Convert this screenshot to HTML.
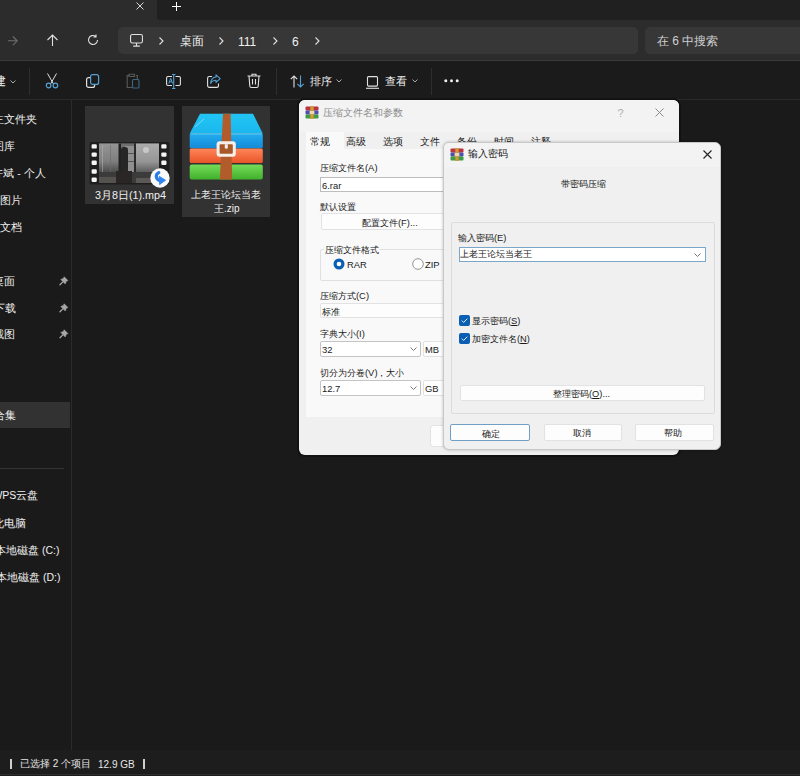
<!DOCTYPE html>
<html><head><meta charset="utf-8">
<style>
*{box-sizing:border-box;margin:0;padding:0}
html,body{width:800px;height:776px;overflow:hidden;background:#1a1a1a;font-family:"Liberation Sans",sans-serif;color:#fff}
.a{position:absolute}
.t{position:absolute;white-space:nowrap;line-height:1}
svg{position:absolute;overflow:visible}
</style></head><body>
<!-- tab strip -->
<div class="a" style="left:0;top:0;width:800px;height:60px;background:#2c2c2c"></div>
<div class="a" style="left:157px;top:0;width:643px;height:20px;background:#202020;border-bottom-left-radius:3px"></div>
<svg style="left:136px;top:2px" width="8" height="8"><path d="M0.5 0.5L7.5 7.5M7.5 0.5L0.5 7.5" stroke="#d8d8d8" stroke-width="1"/></svg>
<svg style="left:172px;top:2px" width="9" height="9"><path d="M4.5 0V9M0 4.5H9" stroke="#fff" stroke-width="1"/></svg>

<!-- nav row -->
<svg style="left:7.5px;top:35.5px" width="11" height="10"><path d="M0 4.8H9.2M4.9 0.5L9.2 4.8L4.9 9.1" fill="none" stroke="#6e6e6e" stroke-width="1.1"/></svg>
<svg style="left:47px;top:34px" width="11" height="12"><path d="M5.5 12V1M0.5 6L5.5 1L10.5 6" fill="none" stroke="#e0e0e0" stroke-width="1.1"/></svg>
<svg style="left:87.2px;top:34px" width="12" height="12"><path d="M10.5 6A4.5 4.5 0 1 1 8.6 2.3M9 0.5V3H6.5" fill="none" stroke="#e0e0e0" stroke-width="1.1"/></svg>
<div class="a" style="left:118px;top:27px;width:520px;height:27px;background:#373737;border-radius:5px"></div>
<svg style="left:130px;top:33.5px" width="13" height="13"><rect x="0.55" y="0.55" width="11.9" height="8.4" rx="1.6" fill="none" stroke="#e0e0e0" stroke-width="1.1"/><path d="M6.5 9V12M3.2 12.1H9.8" stroke="#e0e0e0" stroke-width="1.1"/></svg>
<svg style="left:159px;top:37px" width="5" height="8"><path d="M0.5 0.5L4 4L0.5 7.5" fill="none" stroke="#e0e0e0" stroke-width="1.1"/></svg>
<div class="t" style="left:180px;top:35px;font-size:12px;color:#f0f0f0">桌面</div>
<svg style="left:219px;top:37px" width="5" height="8"><path d="M0.5 0.5L4 4L0.5 7.5" fill="none" stroke="#e0e0e0" stroke-width="1.1"/></svg>
<div class="t" style="left:238px;top:36px;font-size:12px;color:#f0f0f0">111</div>
<svg style="left:273px;top:37px" width="5" height="8"><path d="M0.5 0.5L4 4L0.5 7.5" fill="none" stroke="#e0e0e0" stroke-width="1.1"/></svg>
<div class="t" style="left:292px;top:36px;font-size:12px;color:#f0f0f0">6</div>
<svg style="left:315px;top:37px" width="5" height="8"><path d="M0.5 0.5L4 4L0.5 7.5" fill="none" stroke="#e0e0e0" stroke-width="1.1"/></svg>
<div class="a" style="left:645px;top:27px;width:160px;height:27px;background:#373737;border-radius:5px"></div>
<div class="t" style="left:657px;top:35px;font-size:12px;color:#cfcfcf">在 6 中搜索</div>

<!-- command bar -->
<div class="a" style="left:0;top:60px;width:800px;height:1px;background:#3a3a3a"></div>
<div class="a" style="left:0;top:61px;width:800px;height:39px;background:#1b1b1b"></div>
<div class="a" style="left:0;top:99px;width:800px;height:1px;background:#2a2a2a"></div>

<!-- command bar items -->
<div class="t" style="left:-6.5px;top:75.5px;font-size:11.5px;color:#f0f0f0">建</div>
<svg style="left:10px;top:79.5px" width="6" height="4"><path d="M0.5 0.5L3 3L5.5 0.5" fill="none" stroke="#aaa" stroke-width="1"/></svg>
<div class="a" style="left:29px;top:68px;width:1px;height:27px;background:#2e2e2e"></div>
<!-- scissors -->
<svg style="left:45px;top:73px" width="14" height="16"><path d="M2.5 0.5L8.5 11M11.5 0.5L5.5 11" fill="none" stroke="#e0e0e0" stroke-width="1"/><circle cx="3.6" cy="12.5" r="2.3" fill="none" stroke="#55a0d4" stroke-width="1.2"/><circle cx="10.4" cy="12.5" r="2.3" fill="none" stroke="#55a0d4" stroke-width="1.2"/></svg>
<!-- copy -->
<svg style="left:86px;top:74px" width="14" height="14"><rect x="0.6" y="3.6" width="8" height="9.8" rx="2" fill="none" stroke="#e0e0e0" stroke-width="1.2"/><rect x="4.6" y="0.6" width="8" height="9.8" rx="2" fill="#1c1c1c" stroke="#55a0d4" stroke-width="1.2"/></svg>
<!-- paste (disabled) -->
<svg style="left:126px;top:73px" width="14" height="16"><path d="M3 2.5H1.2V14.5H6" fill="none" stroke="#5a5a5a" stroke-width="1.1"/><path d="M3 1.2H8.5V3.5H3Z" fill="none" stroke="#5a5a5a" stroke-width="1.1"/><path d="M10 2.5H11.3V6" fill="none" stroke="#5a5a5a" stroke-width="1.1"/><rect x="6.5" y="6.5" width="6.5" height="8.5" rx="1" fill="none" stroke="#3d6680" stroke-width="1.1"/></svg>
<!-- rename -->
<svg style="left:166px;top:74px" width="15" height="15"><path d="M6 2.5H2A1.5 1.5 0 0 0 0.6 4V10A1.5 1.5 0 0 0 2 11.5H6M9.5 2.5H13A1.5 1.5 0 0 1 14.4 4V10A1.5 1.5 0 0 1 13 11.5H9.5" fill="none" stroke="#e0e0e0" stroke-width="1.1"/><path d="M7.7 0.5V14.5M6 0.5H9.4M6 14.5H9.4" fill="none" stroke="#55a0d4" stroke-width="1.1"/><path d="M2.8 9.5L4.7 4.2L6.6 9.5M3.5 7.8H5.9" fill="none" stroke="#55a0d4" stroke-width="1"/></svg>
<!-- share -->
<svg style="left:207px;top:74px" width="14" height="14"><path d="M5 2.5H2.3A1.7 1.7 0 0 0 0.6 4.2V11.7A1.7 1.7 0 0 0 2.3 13.4H9.8A1.7 1.7 0 0 0 11.5 11.7V9.5" fill="none" stroke="#e0e0e0" stroke-width="1.1"/><path d="M9 0.8L13.2 4.6L9 8.4V6.3C6.5 6.3 4.7 7.3 3.7 9.5C3.9 6.2 5.8 3.2 9 3Z" fill="#1c1c1c" stroke="#55a0d4" stroke-width="1.1" stroke-linejoin="round"/></svg>
<!-- delete -->
<svg style="left:247px;top:73px" width="14" height="15"><path d="M0.5 3H13.5M5 3V1.3H9V3M2 3L2.8 13.2A1.5 1.5 0 0 0 4.3 14.5H9.7A1.5 1.5 0 0 0 11.2 13.2L12 3" fill="none" stroke="#e0e0e0" stroke-width="1.1"/><path d="M5.5 6V11.5M8.5 6V11.5" stroke="#e0e0e0" stroke-width="1.1"/></svg>
<div class="a" style="left:276px;top:68px;width:1px;height:27px;background:#2e2e2e"></div>
<!-- sort -->
<svg style="left:290px;top:75px" width="15" height="13"><path d="M4 12.5V1M0.8 4.2L4 1L7.2 4.2" fill="none" stroke="#e0e0e0" stroke-width="1.1"/><path d="M10.5 0.5V12M7.3 8.8L10.5 12L13.7 8.8" fill="none" stroke="#55a0d4" stroke-width="1.1"/></svg>
<div class="t" style="left:309.5px;top:76px;font-size:11px;color:#f0f0f0">排序</div>
<svg style="left:336px;top:79px" width="6" height="4"><path d="M0.5 0.5L3 3L5.5 0.5" fill="none" stroke="#aaa" stroke-width="1"/></svg>
<!-- view -->
<svg style="left:365.5px;top:75.5px" width="13" height="13"><rect x="1.5" y="0.6" width="10" height="9.5" rx="1" fill="none" stroke="#e0e0e0" stroke-width="1.1"/><path d="M0 12.3H13" stroke="#e0e0e0" stroke-width="1.1"/></svg>
<div class="t" style="left:385px;top:76px;font-size:11px;color:#f0f0f0">查看</div>
<svg style="left:412px;top:79px" width="6" height="4"><path d="M0.5 0.5L3 3L5.5 0.5" fill="none" stroke="#aaa" stroke-width="1"/></svg>
<div class="a" style="left:431px;top:68px;width:1px;height:27px;background:#2e2e2e"></div>
<svg style="left:444px;top:79px" width="15" height="4"><circle cx="1.8" cy="1.8" r="1.5" fill="#f0f0f0"/><circle cx="7.5" cy="1.8" r="1.5" fill="#f0f0f0"/><circle cx="13.2" cy="1.8" r="1.5" fill="#f0f0f0"/></svg>

<!-- sidebar -->
<div class="a" style="left:71px;top:100px;width:1px;height:650px;background:#2b2b2b"></div>
<div class="a" style="left:0;top:401.5px;width:70px;height:26px;background:#323232"></div>
<div class="t" style="left:-7px;top:114px;font-size:10.5px;color:#f0f0f0">主文件夹</div>
<div class="t" style="left:-7px;top:141px;font-size:10.5px;color:#f0f0f0">图库</div>
<div class="t" style="left:-7.6px;top:168px;font-size:10.5px;color:#f0f0f0">许斌 - 个人</div>
<div class="t" style="left:0px;top:195px;font-size:10.5px;color:#f0f0f0">图片</div>
<div class="t" style="left:0px;top:221.5px;font-size:10.5px;color:#f0f0f0">文档</div>
<div class="t" style="left:-7px;top:275.5px;font-size:10.5px;color:#f0f0f0">桌面</div>
<div class="t" style="left:-6.5px;top:302.5px;font-size:10.5px;color:#f0f0f0">下载</div>
<div class="t" style="left:-7px;top:329px;font-size:10.5px;color:#f0f0f0">截图</div>
<div class="t" style="left:-6.5px;top:409.5px;font-size:10.5px;color:#f0f0f0">合集</div>
<div class="t" style="left:-7.6px;top:490px;font-size:10.5px;color:#f0f0f0">WPS云盘</div>
<div class="t" style="left:-7px;top:517.5px;font-size:10.5px;color:#f0f0f0">此电脑</div>
<div class="t" style="left:-5px;top:544.5px;font-size:10.5px;color:#f0f0f0">本地磁盘 (C:)</div>
<div class="t" style="left:-4px;top:571.5px;font-size:10.5px;color:#f0f0f0">本地磁盘 (D:)</div>
<div class="a" style="left:0;top:468px;width:64px;height:1px;background:#333"></div>

<svg style="left:58.5px;top:275.5px" width="10" height="10"><path d="M5.2 0.8L8.9 4.5L7.3 5.3L6.2 7.9L1.8 3.5L4.4 2.4Z" fill="#a6a6a6" stroke="#a6a6a6" stroke-width="0.6" stroke-linejoin="round"/><path d="M3.6 6.1L1 8.7" stroke="#a6a6a6" stroke-width="1.3" stroke-linecap="round"/></svg>
<svg style="left:58.5px;top:302.5px" width="10" height="10"><path d="M5.2 0.8L8.9 4.5L7.3 5.3L6.2 7.9L1.8 3.5L4.4 2.4Z" fill="#a6a6a6" stroke="#a6a6a6" stroke-width="0.6" stroke-linejoin="round"/><path d="M3.6 6.1L1 8.7" stroke="#a6a6a6" stroke-width="1.3" stroke-linecap="round"/></svg>
<svg style="left:58.5px;top:329px" width="10" height="10"><path d="M5.2 0.8L8.9 4.5L7.3 5.3L6.2 7.9L1.8 3.5L4.4 2.4Z" fill="#a6a6a6" stroke="#a6a6a6" stroke-width="0.6" stroke-linejoin="round"/><path d="M3.6 6.1L1 8.7" stroke="#a6a6a6" stroke-width="1.3" stroke-linecap="round"/></svg>
<!-- status bar -->
<div class="a" style="left:0;top:750px;width:800px;height:26px;background:#1d1d1d"></div><div class="a" style="left:0;top:774px;width:800px;height:1px;background:#2e2e2e"></div>
<div class="a" style="left:9.5px;top:759px;width:2px;height:10px;background:#cfcfcf"></div>
<div class="t" style="left:20px;top:759px;font-size:10px;color:#e6e6e6">已选择 2 个项目</div><div class="t" style="left:98px;top:759.5px;font-size:10px;color:#e6e6e6">12.9 GB</div>
<div class="a" style="left:143px;top:759px;width:2px;height:10px;background:#cfcfcf"></div>

<!-- content items -->
<div class="a" style="left:85px;top:105.5px;width:89px;height:98px;background:#323232"></div>
<svg style="left:88px;top:141px" width="82" height="44">
<defs><filter id="bl" x="0" y="0" width="100%" height="100%" filterUnits="objectBoundingBox"><feGaussianBlur stdDeviation="0.7"/></filter>
<linearGradient id="cl" x1="0" y1="0" x2="0" y2="1"><stop offset="0" stop-color="#959595"/><stop offset="0.6" stop-color="#7e7e7e"/><stop offset="1" stop-color="#454545"/></linearGradient>
<linearGradient id="cr" x1="0" y1="0" x2="0" y2="1"><stop offset="0" stop-color="#acacac"/><stop offset="0.6" stop-color="#969696"/><stop offset="1" stop-color="#555"/></linearGradient>
</defs>
<rect x="1.5" y="1" width="80" height="42.5" rx="2" fill="#1e1e1e"/>
<g filter="url(#bl)">
<rect x="11" y="2.5" width="60" height="39.5" fill="#555"/>
<rect x="11" y="2.5" width="20" height="30" fill="url(#cl)"/>
<rect x="14" y="4" width="1" height="28" fill="#b8b8b8" opacity=".5"/>
<rect x="22" y="4" width="1" height="28" fill="#6a6a6a" opacity=".6"/>
<rect x="31" y="2.5" width="15" height="30" fill="#6e6e6e"/>
<rect x="37" y="5" width="9" height="26" fill="#8f8f8f"/>
<rect x="37" y="12" width="9" height="1" fill="#555"/><rect x="37" y="20" width="9" height="1" fill="#555"/>
<rect x="30.5" y="2.5" width="2.5" height="39" fill="#222"/>
<rect x="46" y="2.5" width="2" height="39" fill="#2a2a2a"/>
<rect x="33" y="6" width="7" height="36" rx="3" fill="#262626"/>
<rect x="48" y="2.5" width="23" height="30" fill="url(#cr)"/>
<circle cx="58" cy="9" r="3" fill="#c8c8c8"/>
<rect x="11" y="31" width="60" height="11" fill="#3a3a3a"/>
<rect x="11" y="36" width="18" height="6" fill="#55524f"/>
<rect x="28" y="30" width="16" height="12" fill="#2a2726"/>
<rect x="48" y="37" width="22" height="5" fill="#5c5954"/>
</g>
<g fill="#f4f4f4"><rect x="3.6" y="3.2" width="5.2" height="4.4" rx="1.2"/><rect x="3.6" y="11.4" width="5.2" height="4.4" rx="1.2"/><rect x="3.6" y="19.6" width="5.2" height="4.4" rx="1.2"/><rect x="3.6" y="28.3" width="5.2" height="4.4" rx="1.2"/><rect x="3.6" y="36.5" width="5.2" height="4.4" rx="1.2"/><rect x="73.3" y="3.2" width="5.2" height="4.4" rx="1.2"/><rect x="73.3" y="11.4" width="5.2" height="4.4" rx="1.2"/><rect x="73.3" y="19.6" width="5.2" height="4.4" rx="1.2"/></g>
</svg>
<svg style="left:150px;top:167.5px" width="20" height="20"><circle cx="10" cy="10" r="9.7" fill="#fafafa"/><path d="M8.8 4.6C5.6 6 5 10.8 9.8 12.6" fill="none" stroke="#2a7de6" stroke-width="3.2" stroke-linecap="round"/><path d="M9.2 8.2L15.6 12.2L9.6 16.6Z" fill="#2f86ee" stroke="#2f86ee" stroke-width="0.8" stroke-linejoin="round"/></svg>
<div class="t" style="left:95px;top:190px;font-size:10.75px;color:#f0f0f0">3月8日(1).mp4</div>

<div class="a" style="left:182px;top:105.5px;width:88px;height:111px;background:#323232"></div>
<svg style="left:189px;top:113px" width="75" height="68">
<defs>
<linearGradient id="gt" x1="0" y1="0" x2="0" y2="1"><stop offset="0" stop-color="#22c6f4"/><stop offset="1" stop-color="#1ab6ee"/></linearGradient>
<linearGradient id="gb" x1="0" y1="0" x2="0" y2="1"><stop offset="0" stop-color="#22aef0"/><stop offset="1" stop-color="#168ad8"/></linearGradient>
<linearGradient id="go" x1="0" y1="0" x2="0" y2="1"><stop offset="0" stop-color="#ff8658"/><stop offset="1" stop-color="#e9552a"/></linearGradient>
<linearGradient id="gg" x1="0" y1="0" x2="0" y2="1"><stop offset="0" stop-color="#76dc58"/><stop offset="1" stop-color="#3fb02c"/></linearGradient>
</defs>
<path d="M11 0.7H64L73.8 20.6H0.7Z" fill="url(#gt)"/>
<rect x="0.7" y="20.4" width="73.1" height="14.8" rx="1.5" fill="url(#gb)"/>
<path d="M1.5 20.9H73" stroke="#86dcf8" stroke-width="1" opacity=".8"/>
<rect x="0.7" y="35.4" width="73.1" height="14.6" rx="1.5" fill="url(#go)"/>
<rect x="0.7" y="51.4" width="73.1" height="15.2" rx="2" fill="url(#gg)"/>
<path d="M34 0.7H41.6L43.2 66.6H30.8Z" fill="#b35c2b"/>
<rect x="27.6" y="28.2" width="19.2" height="15.6" rx="3" fill="#f6efe9"/>
<rect x="30.6" y="31.2" width="13.2" height="9.6" rx="1" fill="#a9582a"/>
<path d="M35.8 31.2H38.8V34.2A1.5 1.5 0 0 1 35.8 34.2Z" fill="#f6efe9"/>
<path d="M6 14L15 6" stroke="#c8f0ff" stroke-width="0.8" opacity=".7"/>
</svg>
<div class="t" style="left:191px;top:190px;font-size:10px;color:#f0f0f0">上老王论坛当老</div>
<div class="t" style="left:214px;top:203.5px;font-size:10px;color:#f0f0f0">王.zip</div>

<!-- dialog 1 -->
<div class="a" style="left:297px;top:98px;width:384px;height:359px;background:#121212;border-radius:8px"></div>
<div class="a" style="left:299px;top:100px;width:380px;height:355px;background:#f0f0f0;border-radius:6px;overflow:hidden">
  <div class="a" style="left:0;top:0;width:380px;height:32px;background:#f3f3f3"></div>
</div>
<svg style="left:305px;top:105.5px" width="14" height="13"><rect x="0.5" y="0.5" width="13" height="4" rx="1" fill="#b8343f"/><rect x="0.5" y="4.5" width="13" height="4" rx="1" fill="#4a4fb0"/><rect x="0.5" y="8.5" width="13" height="4" rx="1" fill="#3f9a45"/><rect x="5.3" y="0" width="3.4" height="13" fill="#d09a3a"/><rect x="4.6" y="5" width="4.8" height="3" rx="0.6" fill="#f0d9a8"/></svg>
<div class="t" style="left:323px;top:108px;font-size:10.3px;color:#8c8c8c">压缩文件名和参数</div>
<div class="t" style="left:617.5px;top:107.5px;font-size:11px;color:#b0b0b0">?</div>
<svg style="left:655px;top:108px" width="9" height="9"><path d="M0.5 0.5L8.5 8.5M8.5 0.5L0.5 8.5" stroke="#8a8a8a" stroke-width="1"/></svg>
<div class="a" style="left:306px;top:132px;width:38px;height:18px;background:#f9f9f9"></div>
<div class="a" style="left:306px;top:149px;width:373px;height:268px;background:#f9f9f9"></div>
<div class="t" style="left:310px;top:137px;font-size:10px;color:#1a1a1a">常规</div>
<div class="t" style="left:346px;top:137px;font-size:10px;color:#1a1a1a">高级</div>
<div class="t" style="left:383px;top:137px;font-size:10px;color:#1a1a1a">选项</div>
<div class="t" style="left:420px;top:137px;font-size:10px;color:#1a1a1a">文件</div>
<div class="t" style="left:457px;top:137px;font-size:10px;color:#1a1a1a">备份</div>
<div class="t" style="left:494px;top:137px;font-size:10px;color:#1a1a1a">时间</div>
<div class="t" style="left:531px;top:137px;font-size:10px;color:#1a1a1a">注释</div>
<div class="t" style="left:320px;top:162.5px;font-size:9.4px;color:#1a1a1a">压缩文件名(A)</div>
<div class="a" style="left:320px;top:177px;width:300px;height:15px;background:#fff;border:1px solid #bdbdbd"></div>
<div class="t" style="left:322px;top:180.5px;font-size:9.4px;color:#1a1a1a">6.rar</div>
<div class="t" style="left:320px;top:201.5px;font-size:9.4px;color:#1a1a1a">默认设置</div>
<div class="a" style="left:321px;top:213px;width:200px;height:17px;background:#fdfdfd;border:1px solid #e2e2e2;border-radius:2px"></div>
<div class="t" style="left:362px;top:217.5px;font-size:9.4px;color:#1a1a1a">配置文件(F)...</div>
<div class="a" style="left:320px;top:249px;width:200px;height:32px;border:1px solid #e0e0e0;border-radius:2px"></div>
<div class="a" style="left:324px;top:244px;width:56px;height:10px;background:#f9f9f9"></div>
<div class="t" style="left:325px;top:244.5px;font-size:9.4px;color:#1a1a1a">压缩文件格式</div>
<svg style="left:333px;top:258px" width="12" height="12"><circle cx="6" cy="6" r="5.5" fill="#0a5fb4"/><circle cx="6" cy="6" r="2.3" fill="#fff"/></svg>
<div class="t" style="left:347px;top:259.5px;font-size:9.4px;color:#1a1a1a">RAR</div>
<svg style="left:412px;top:258px" width="12" height="12"><circle cx="6" cy="6" r="5.3" fill="#fff" stroke="#8a8a8a" stroke-width="0.9"/></svg>
<div class="t" style="left:425px;top:259.5px;font-size:9.4px;color:#1a1a1a">ZIP</div>
<div class="t" style="left:320px;top:290.5px;font-size:9.4px;color:#1a1a1a">压缩方式(C)</div>
<div class="a" style="left:320px;top:303px;width:200px;height:15px;background:#fdfdfd;border:1px solid #e2e2e2;border-radius:2px"></div>
<div class="t" style="left:322px;top:306.5px;font-size:9.4px;color:#1a1a1a">标准</div>
<div class="t" style="left:320px;top:328.5px;font-size:9.4px;color:#1a1a1a">字典大小(I)</div>
<div class="a" style="left:320px;top:341px;width:101px;height:16px;background:#fff;border:1px solid #c4c4c4;border-radius:2px"></div>
<div class="t" style="left:322px;top:344.5px;font-size:9.4px;color:#1a1a1a">32</div>
<svg style="left:410px;top:347px" width="7" height="4"><path d="M0.5 0.5L3.5 3.5L6.5 0.5" fill="none" stroke="#666" stroke-width="0.9"/></svg>
<div class="a" style="left:423px;top:341px;width:60px;height:16px;background:#fdfdfd;border:1px solid #e2e2e2;border-radius:2px"></div>
<div class="t" style="left:425px;top:344.5px;font-size:9.4px;color:#1a1a1a">MB</div>
<div class="t" style="left:320px;top:367.5px;font-size:9.4px;color:#1a1a1a">切分为分卷(V)，大小</div>
<div class="a" style="left:320px;top:380px;width:101px;height:16px;background:#fff;border:1px solid #c4c4c4;border-radius:2px"></div>
<div class="t" style="left:322px;top:383.5px;font-size:9.4px;color:#1a1a1a">12.7</div>
<svg style="left:410px;top:386px" width="7" height="4"><path d="M0.5 0.5L3.5 3.5L6.5 0.5" fill="none" stroke="#666" stroke-width="0.9"/></svg>
<div class="a" style="left:423px;top:380px;width:60px;height:16px;background:#fdfdfd;border:1px solid #e2e2e2;border-radius:2px"></div>
<div class="t" style="left:425px;top:383.5px;font-size:9.4px;color:#1a1a1a">GB</div>
<div class="a" style="left:430px;top:425px;width:60px;height:22px;background:#fdfdfd;border:1px solid #e2e2e2;border-radius:3px"></div>

<!-- dialog 2 -->
<div class="a" style="left:443px;top:142px;width:278px;height:308px;background:#f0f0f0;border:1px solid #c8c8c8;border-radius:6px;box-shadow:0 0 3px rgba(0,0,0,.25)"></div>
<div class="a" style="left:444px;top:143px;width:276px;height:24px;background:#f3f3f3;border-radius:5px 5px 0 0"></div>
<svg style="left:450px;top:147.5px" width="14" height="13"><rect x="0.5" y="0.5" width="13" height="4" rx="1" fill="#b8343f"/><rect x="0.5" y="4.5" width="13" height="4" rx="1" fill="#4a4fb0"/><rect x="0.5" y="8.5" width="13" height="4" rx="1" fill="#3f9a45"/><rect x="5.3" y="0" width="3.4" height="13" fill="#d09a3a"/><rect x="4.6" y="5" width="4.8" height="3" rx="0.6" fill="#f0d9a8"/></svg>
<div class="t" style="left:467.5px;top:149px;font-size:10.2px;color:#1a1a1a">输入密码</div>
<svg style="left:703px;top:150px" width="9" height="9"><path d="M0.5 0.5L8.5 8.5M8.5 0.5L0.5 8.5" stroke="#222" stroke-width="1.1"/></svg>
<div class="t" style="left:561px;top:180px;font-size:9.3px;color:#1a1a1a">带密码压缩</div>
<div class="a" style="left:451px;top:222px;width:264px;height:192px;border:1px solid #dcdcdc;border-radius:2px"></div>
<div class="t" style="left:458px;top:234px;font-size:9.3px;color:#1a1a1a">输入密码(E)</div>
<div class="a" style="left:459px;top:247px;width:247px;height:15px;background:#fff;border:1px solid #7aa7c7"></div>
<div class="t" style="left:460px;top:250px;font-size:9.3px;color:#1a1a1a">上老王论坛当老王</div>
<svg style="left:694px;top:253px" width="7" height="4"><path d="M0.5 0.5L3.5 3.5L6.5 0.5" fill="none" stroke="#666" stroke-width="0.9"/></svg>
<svg style="left:459px;top:315px" width="11" height="11"><rect x="0" y="0" width="11" height="11" rx="2" fill="#0a5fb4"/><path d="M2.8 5.6L4.6 7.4L8.3 3.7" fill="none" stroke="#fff" stroke-width="0.9"/></svg>
<div class="t" style="left:472px;top:317px;font-size:9.3px;color:#1a1a1a">显示密码(<u>S</u>)</div>
<svg style="left:459px;top:333px" width="11" height="11"><rect x="0" y="0" width="11" height="11" rx="2" fill="#0a5fb4"/><path d="M2.8 5.6L4.6 7.4L8.3 3.7" fill="none" stroke="#fff" stroke-width="0.9"/></svg>
<div class="t" style="left:472px;top:335px;font-size:9.3px;color:#1a1a1a">加密文件名(<u>N</u>)</div>
<div class="a" style="left:460px;top:385px;width:245px;height:16px;background:#fdfdfd;border:1px solid #e2e2e2;border-radius:2px"></div>
<div class="t" style="left:553px;top:389.5px;font-size:9.3px;color:#1a1a1a">整理密码(<u>O</u>)...</div>
<div class="a" style="left:450px;top:424px;width:80px;height:17px;background:#fdfdfd;border:1px solid #6f9fc4;border-radius:2px"></div>
<div class="t" style="left:482px;top:429.5px;font-size:9.3px;color:#1a1a1a">确定</div>
<div class="a" style="left:544px;top:424px;width:78px;height:17px;background:#fdfdfd;border:1px solid #e2e2e2;border-radius:2px"></div>
<div class="t" style="left:573px;top:429px;font-size:9.3px;color:#1a1a1a">取消</div>
<div class="a" style="left:635px;top:424px;width:79px;height:17px;background:#fdfdfd;border:1px solid #e2e2e2;border-radius:2px"></div>
<div class="t" style="left:664px;top:429px;font-size:9.3px;color:#1a1a1a">帮助</div>
</body></html>
